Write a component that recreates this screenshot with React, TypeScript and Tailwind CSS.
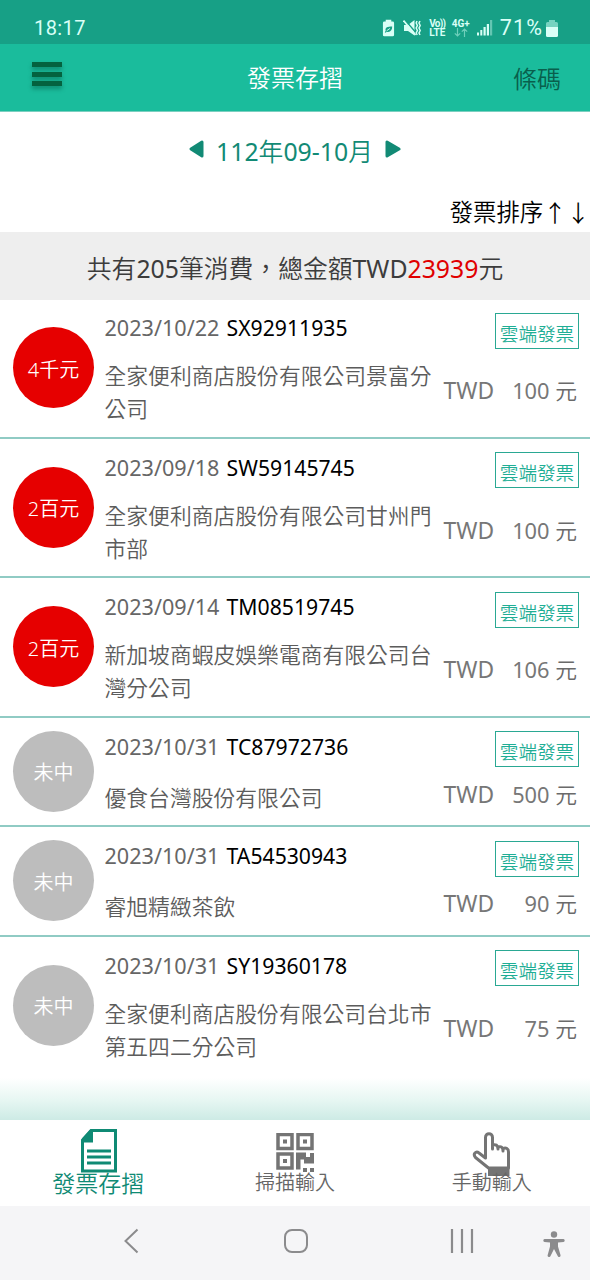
import type { ReactNode } from 'react';

interface Invoice {
  prize: string;
  won: boolean;
  date: string;
  number: string;
  seller: string;
  amount: number;
}

const invoices: Invoice[] = [
  { prize: '4千元', won: true, date: '2023/10/22', number: 'SX92911935', seller: '全家便利商店股份有限公司景富分公司', amount: 100 },
  { prize: '2百元', won: true, date: '2023/09/18', number: 'SW59145745', seller: '全家便利商店股份有限公司甘州門市部', amount: 100 },
  { prize: '2百元', won: true, date: '2023/09/14', number: 'TM08519745', seller: '新加坡商蝦皮娛樂電商有限公司台灣分公司', amount: 106 },
  { prize: '未中', won: false, date: '2023/10/31', number: 'TC87972736', seller: '優食台灣股份有限公司', amount: 500 },
  { prize: '未中', won: false, date: '2023/10/31', number: 'TA54530943', seller: '睿旭精緻茶飲', amount: 90 },
  { prize: '未中', won: false, date: '2023/10/31', number: 'SY19360178', seller: '全家便利商店股份有限公司台北市第五四二分公司', amount: 75 },
];

function StatusBar() {
  return (
    <div className="h-11 shrink-0 bg-[#17a086] text-[#d9fff6] flex items-center pl-[34px] pr-8 pt-3 font-normal">
      <span className="text-[20px] leading-8 font-[Roboto] tracking-[0.4px]">18:17</span>
      <div className="ml-auto flex items-center">
        {/* Battery saver */}
        <svg className="w-[13px] h-[18px]" viewBox="0 0 14 18">
          <path d="M4 0h6v2h1.500q1.500 0 1.500 1.500v13q0 1.500-1.500 1.500h-9q-1.500 0-1.500-1.500v-13q0-1.500 1.500-1.500H4z" fill="currentColor" />
          <path d="M3 13.500l1-1.500C3 8.500 6 7.500 11 7.500c0 4-2 6.500-6 5.500l-1 1z" fill="#17a086" />
          <path d="M5 12l3.500-2.500" stroke="#d9fff6" />
        </svg>
        {/* Muted, vibrate */}
        <svg className="w-[18px] h-[18px] ml-2" viewBox="0 0 18 18" fill="none" stroke="currentColor">
          <path d="M1 6h4l6.500-5v15.500L5 12H1z" fill="currentColor" stroke="none" />
          <path d="M2 1l12 14" stroke="#17a086" strokeWidth="1.500" />
          <path d="M.5 1.500l12 14.500" strokeWidth="1.800" />
          <path d="M14 2l-.8 2 1.200 2.500-1.200 2.500 1.200 2.500-1.200 2.500 1 2M17 2l-1 2 1.200 2.500L16 9l1.200 2.500L16 14l1 2" strokeWidth="1.500" />
        </svg>
        <div className="ml-[7px] w-[19px] font-[Roboto] font-bold text-[10px] leading-[9px] text-center whitespace-nowrap">
          <div className="tracking-[-0.7px]">Vo))</div>
          <div>LTE</div>
        </div>
        <div className="ml-[5px] w-[18px] flex flex-col items-center">
          <div className="font-[Roboto] font-bold text-[10px] leading-[9px]">4G+</div>
          <svg className="w-3.5 h-[9px]" viewBox="0 0 14 9" fill="none" stroke="#6fcfbb" strokeWidth="1.200">
            <path d="M3.500 0v8M.8 5.300l2.700 2.700 2.700-2.700M10.500 9V1M7.800 3.700L10.500 1l2.700 2.700" />
          </svg>
        </div>
        <svg className="w-4 h-4 ml-[7px]" viewBox="0 0 16 16" fill="currentColor">
          <rect x="0" y="12.500" width="2" height="3" />
          <rect x="3.300" y="10" width="2" height="5.500" />
          <rect x="6.500" y="7" width="2.200" height="8.500" />
          <rect x="9.800" y="4" width="2.200" height="11.500" />
          <rect x="13" y="0" width="2.200" height="15.500" opacity=".4" />
        </svg>
        <span className="ml-[7px] text-[21.500px] leading-8 font-[Roboto] tracking-[1.100px]">71%</span>
        <svg className="w-3 h-[17px] ml-[3px]" viewBox="0 0 12 17">
          <path d="M3 0h6v2h1.500Q12 2 12 3.500V7H0V3.500Q0 2 1.500 2H3z" fill="#76d3c0" />
          <path d="M0 7h12v8.500q0 1.500-1.500 1.500h-9Q0 17 0 15.500z" fill="currentColor" />
        </svg>
      </div>
    </div>
  );
}

function Header() {
  return (
    <header className="h-[68px] shrink-0 bg-[#1abc9c] border-b border-[#7ccfc0] grid grid-cols-3 items-center pl-[31px] pr-[29px]">
      <button className="w-[30px] ml-px flex flex-col gap-[4.5px] -mt-[7px] drop-shadow-[0_3px_2px_rgba(0,80,60,0.45)]" aria-label="選單">
        <span className="h-[5px] bg-[#04623f]" />
        <span className="h-[5px] bg-[#04623f]" />
        <span className="h-[5px] bg-[#04623f]" />
      </button>
      <h1 className="text-center text-[24px] leading-8 pt-px pr-0.5 text-white">發票存摺</h1>
      <span className="text-right text-[24px] leading-8 pt-[3px] text-[#095f4c]">條碼</span>
    </header>
  );
}

function InvoiceRow({ invoice }: { invoice: Invoice }) {
  return (
    <li className="flex items-stretch border-b-2 border-[#90cbc4] last:border-b-0 pl-[13px] pr-[13px]">
      <div className="flex items-center shrink-0">
        <div
          className={`w-[81px] h-[81px] rounded-full flex items-center justify-center text-white text-[20px] pt-1 ${
            invoice.won ? 'bg-[#e60000]' : 'bg-[#bdbdbd]'
          }`}
        >
          {invoice.prize}
        </div>
      </div>
      <div className="flex-1 ml-[10.5px] pb-[11.5px]">
        <div className="h-[60px] flex items-start justify-between">
          <p className="mt-3 leading-[33px] font-normal text-[#666]">
            <span className="text-[21.600px]">{invoice.date}</span>{' '}
            <span className="ml-[1.500px] text-black text-[21.2px]">{invoice.number}</span>
          </p>
          <span className="mt-[13.5px] -mr-0.5 w-[84px] h-9 border border-[#2aa893] text-[#1fae95] text-[18.6px] leading-[39px] text-center">
            雲端發票
          </span>
        </div>
        <div className="min-h-9 flex items-end">
          <p className="w-[330px] leading-[33px]">{invoice.seller}</p>
          <div className="self-center -mt-[3px] ml-[9px] flex-1 flex justify-between leading-[33px] text-[#6a6a6a]">
            <span className="text-[22.8px] font-normal text-[#777]">TWD</span>
            <span>
              <span className="font-normal text-[#777]">{invoice.amount}</span> 元
            </span>
          </div>
        </div>
      </div>
    </li>
  );
}

function Tab({ label, active, children }: { label: string; active?: boolean; children: ReactNode }) {
  return (
    <button
      className={`flex-1 flex flex-col items-center ${
        active ? 'text-[#0f8a74] text-[23px]' : 'text-[#666] text-[20px]'
      }`}
    >
      <div className="h-[51px] pt-[9px] pl-0.5">{children}</div>
      <span className="leading-6">{label}</span>
    </button>
  );
}

function TabBar() {
  return (
    <nav className="h-[86px] shrink-0 bg-white flex">
      <Tab label="發票存摺" active>
        <svg className="w-9 h-11" viewBox="0 0 36 44">
          <path d="M10 1.500h24.500v40.500H1.500V11z" fill="none" stroke="currentColor" strokeWidth="3" />
          <path d="M9 1h3v12.500H1V9.500z" fill="currentColor" />
          <path d="M6 22h24M6 28h24M6 34h24" stroke="currentColor" strokeWidth="3" />
        </svg>
      </Tab>
      <Tab label="掃描輸入">
        <svg className="w-10 h-10 mt-1" viewBox="0 0 40 40" fill="#747474">
          <path d="M2 1.500h14v14H2zM22 1.500h14v14H22zM2 21h14v14H2z" fill="none" stroke="#747474" strokeWidth="3.500" />
          <path d="M7 6.500h4v4H7zM27 6.500h4v4h-4zM7 26h4v4H7zM20 19.500h10v4.500h4v-4h4v10.500H28v-4h-3.500v10H20zM27 35h4v4h-4zM34 35h4v4h-4z" />
        </svg>
      </Tab>
      <Tab label="手動輸入">
        <svg className="w-[38px] h-11 mt-[3px] -ml-[3px]" viewBox="0 0 38 44" fill="none" stroke="#747474" strokeWidth="3" strokeLinejoin="round">
          <path d="M16.500 36L3.500 25.500C.5 22 4 18.500 7 21l6.500 5V5.500c0-5 7-5 7 0V17v-4c3-1 5.500 0 5.500 4v-2c3-1 5 0 5 4v-2.500c3-1 5.500 0 5.500 3.500V36z" />
          <path d="M16 35h21.500v9H16z" fill="#747474" stroke="none" />
        </svg>
      </Tab>
    </nav>
  );
}

function SystemNav() {
  return (
    <div className="h-[74px] shrink-0 bg-[#f5f5f7] text-[#8b8b8d] flex items-center pl-[123px] pr-[25px] pb-1">
      <svg className="w-4 h-[26px]" viewBox="0 0 16 26" fill="none" stroke="currentColor" strokeWidth="2">
        <path d="M14.500 1.500L2.500 13l12 11.500" />
      </svg>
      <svg className="w-[26px] h-[26px] ml-[144px]" viewBox="0 0 26 26" fill="none" stroke="currentColor" strokeWidth="2">
        <rect x="2" y="2" width="22" height="22" rx="7" />
      </svg>
      <svg className="w-6 h-6 ml-[141px]" viewBox="0 0 24 24" stroke="currentColor" strokeWidth="2.200">
        <path d="M2 0v24M12 0v24M22 0v24" />
      </svg>
      <svg className="w-[22px] h-[26px] ml-auto mt-1.5" viewBox="0 0 22 26" fill="currentColor">
        <circle cx="11" cy="3.500" r="3.200" />
        <path d="M1.500 8h19q1.200.2 1.200 1.500t-1.200 1.500L15 11.500v4l2.500 8.500q.3 1.500-1 2-1.300.2-1.800-1L11 18l-3.500 7q-.5 1.200-1.800 1-1.500-.5-1-2L7 15.500v-4L1.500 11Q.3 10.800.3 9.500T1.500 8z" />
      </svg>
    </div>
  );
}

export default function App() {
  return (
    <div
      lang="zh-TW"
      className="w-[590px] h-[1280px] bg-white overflow-hidden flex flex-col text-[21.8px] text-[#5c5c5c] font-[350] font-['Noto_Sans','Noto_Sans_CJK_TC',sans-serif]"
    >
      <StatusBar />
      <Header />

      {/* Period picker */}
      <div className="h-[78px] shrink-0 flex items-center justify-center gap-3 text-[#128a75] text-[24.8px] leading-8">
        <svg className="w-[15px] h-[18px] -mt-1" viewBox="0 0 15 18">
          <path d="M13 2v14L2 9z" fill="currentColor" stroke="currentColor" strokeWidth="3" strokeLinejoin="round" />
        </svg>
        <span>
          <span className="font-normal">112</span>年<span className="font-normal">09-10</span>月
        </span>
        <svg className="w-4 h-[18px] -mt-1" viewBox="0 0 16 18">
          <path d="M2 2v14l12-7z" fill="currentColor" stroke="currentColor" strokeWidth="3" strokeLinejoin="round" />
        </svg>
      </div>
      <div className="h-[42px] shrink-0 flex justify-end text-[23.400px] leading-[44px] text-black">
        <span>發票排序</span>
        <span className="font-['Noto_Sans_CJK_TC']">↑↓</span>
      </div>

      <div className="h-[68px] shrink-0 bg-[#eee] text-[#3c3c3c] text-[24.8px] leading-[73px] text-center">
        共有<span className="font-normal">205</span>筆消費，總金額
        <span className="font-normal">TWD</span>
        <span className="font-normal text-[#e00000]">23939</span>元
      </div>

      <ul className="flex-1 min-h-0 -mt-px overflow-hidden">
        {invoices.map((invoice) => (
          <InvoiceRow key={invoice.number} invoice={invoice} />
        ))}
      </ul>
      <div className="h-[42px] shrink-0 bg-gradient-to-b from-white via-[#e8f7f3] to-[#cdebe5]" />

      <TabBar />
      <SystemNav />
    </div>
  );
}
